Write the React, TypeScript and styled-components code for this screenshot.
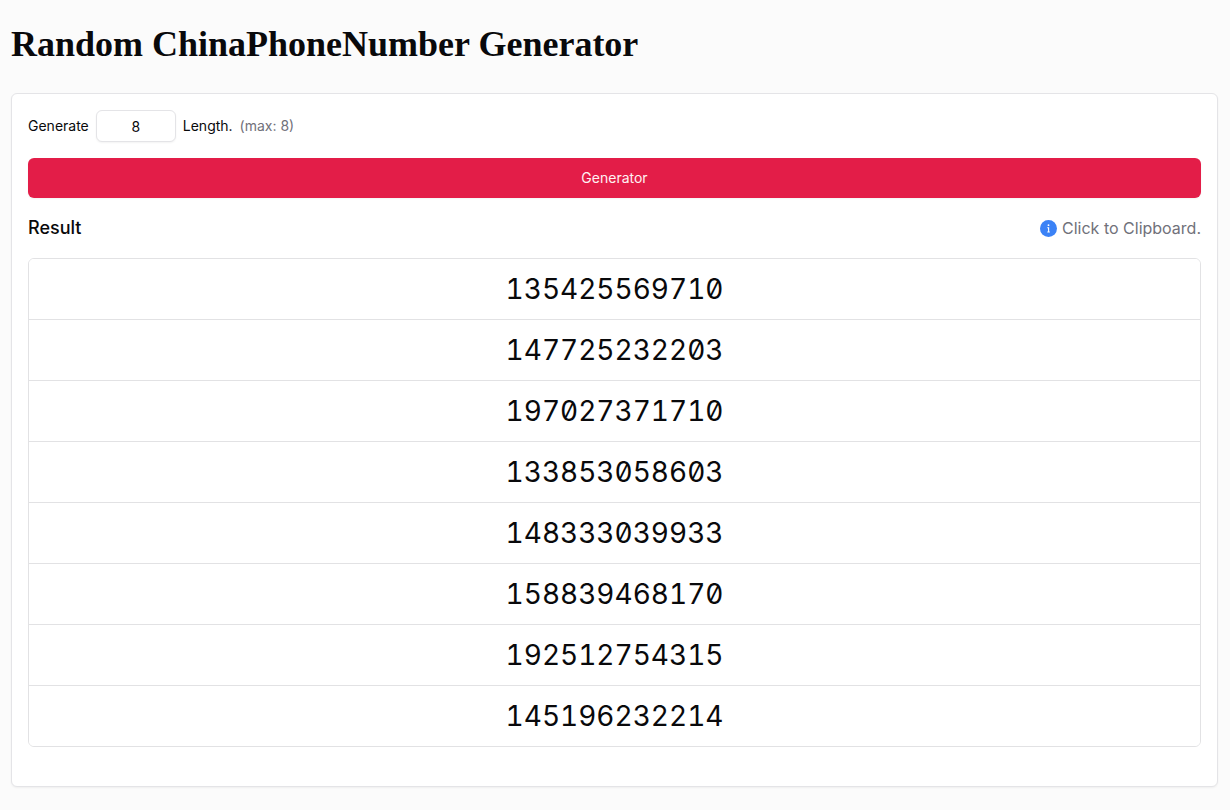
import React, { useState } from "react";
import styled, { createGlobalStyle } from "styled-components";

const GlobalStyle = createGlobalStyle`
  *, *::before, *::after { box-sizing: border-box; }
  body {
    margin: 0;
    background: #fbfbfb;
    color: #09090b;
    font-family: Inter, "Liberation Sans", sans-serif;
    font-size: 14px;
    line-height: 20px;
  }
`;

const Page = styled.main`
  padding: 24px 12px 22px 11px;
`;

const Title = styled.h1`
  margin: 0 0 29px;
  font-family: Georgia, "Liberation Serif", serif;
  font-size: 36px;
  font-weight: 700;
  line-height: 40px;
`;

const Card = styled.section`
  padding: 16px 16px 39px;
  border: 1px solid #e4e4e7;
  border-radius: 6px;
  background: #fff;
  box-shadow: 0 1px 2px rgba(0, 0, 0, 0.05);
`;

const Controls = styled.div`
  display: flex;
  align-items: center;
  gap: 7px;
`;

const LengthInput = styled.input`
  width: 80px;
  height: 32px;
  padding: 4px 12px;
  border: 1px solid #e4e4e7;
  border-radius: 6px;
  background: #fff;
  color: inherit;
  font: inherit;
  text-align: center;
  box-shadow: 0 1px 2px rgba(0, 0, 0, 0.05);
`;

const Hint = styled.span`
  color: #71717a;
`;

const GenerateButton = styled.button`
  display: block;
  width: 100%;
  height: 40px;
  margin: 16px 0;
  border: 0;
  border-radius: 6px;
  background: #e31d48;
  color: #fff1f2;
  font: inherit;
  font-size: 14px;
  box-shadow: 0 1px 2px rgba(0, 0, 0, 0.05);
  cursor: pointer;
`;

const ResultHeader = styled.div`
  display: flex;
  align-items: center;
  justify-content: space-between;
  height: 28px;
  margin-bottom: 16px;
`;

const ResultTitle = styled.h2`
  margin: 0;
  font-size: 18px;
  font-weight: 500;
  line-height: 28px;
`;

const Tip = styled.span`
  display: flex;
  align-items: center;
  gap: 5px;
  color: #71717a;
  font-size: 16px;
  line-height: 24px;
`;

const NumberList = styled.ul`
  margin: 0;
  padding: 0;
  overflow: hidden;
  list-style: none;
  border: 1px solid #e2e2e4;
  border-radius: 6px;
`;

const NumberRow = styled.li`
  & + & { border-top: 1px solid #e2e2e4; }
`;

const NumberButton = styled.button`
  display: block;
  width: 100%;
  height: 60px;
  padding: 0;
  border: 0;
  background: #fff;
  color: inherit;
  font-family: Inter, "Liberation Mono", monospace;
  font-size: 28px;
  line-height: 36px;
  font-variant-numeric: tabular-nums slashed-zero;
  cursor: pointer;
`;

const InfoIcon = () => (
  <svg width="17" height="17" viewBox="0 0 17 17" aria-hidden="true">
    <circle cx="8.5" cy="8.5" r="8.5" fill="#3b82f6" />
    <circle cx="8.5" cy="5.2" r="0.9" fill="#fff" />
    <path d="M7.3 7.7h1.3v4M7.3 12h2.5" fill="none" stroke="#fff" strokeWidth="1.1" />
  </svg>
);

const MAX = 8;
const INITIAL = [
  "135425569710", "147725232203", "197027371710", "133853058603",
  "148333039933", "158839468170", "192512754315", "145196232214",
];

const randomNumber = () =>
  "1" + Array.from({ length: 11 }, () => Math.floor(Math.random() * 10)).join("");

export default function App() {
  const [length, setLength] = useState("8");
  const [numbers, setNumbers] = useState(INITIAL);

  const generate = () => {
    const count = Math.min(MAX, Math.max(1, Number(length) || 1));
    setNumbers(Array.from({ length: count }, randomNumber));
  };

  return (
    <>
      <GlobalStyle />
      <Page>
        <Title>Random ChinaPhoneNumber Generator</Title>
        <Card>
          <Controls>
            <label htmlFor="length">Generate</label>
            <LengthInput
              id="length"
              inputMode="numeric"
              value={length}
              onChange={(e) => setLength(e.target.value)}
            />
            <span>Length.</span>
            <Hint>(max: 8)</Hint>
          </Controls>
          <GenerateButton type="button" onClick={generate}>Generator</GenerateButton>
          <ResultHeader>
            <ResultTitle>Result</ResultTitle>
            <Tip><InfoIcon />Click to Clipboard.</Tip>
          </ResultHeader>
          <NumberList>
            {numbers.map((n, i) => (
              <NumberRow key={i}>
                <NumberButton type="button" onClick={() => navigator.clipboard?.writeText(n)}>
                  {n}
                </NumberButton>
              </NumberRow>
            ))}
          </NumberList>
        </Card>
      </Page>
    </>
  );
}
